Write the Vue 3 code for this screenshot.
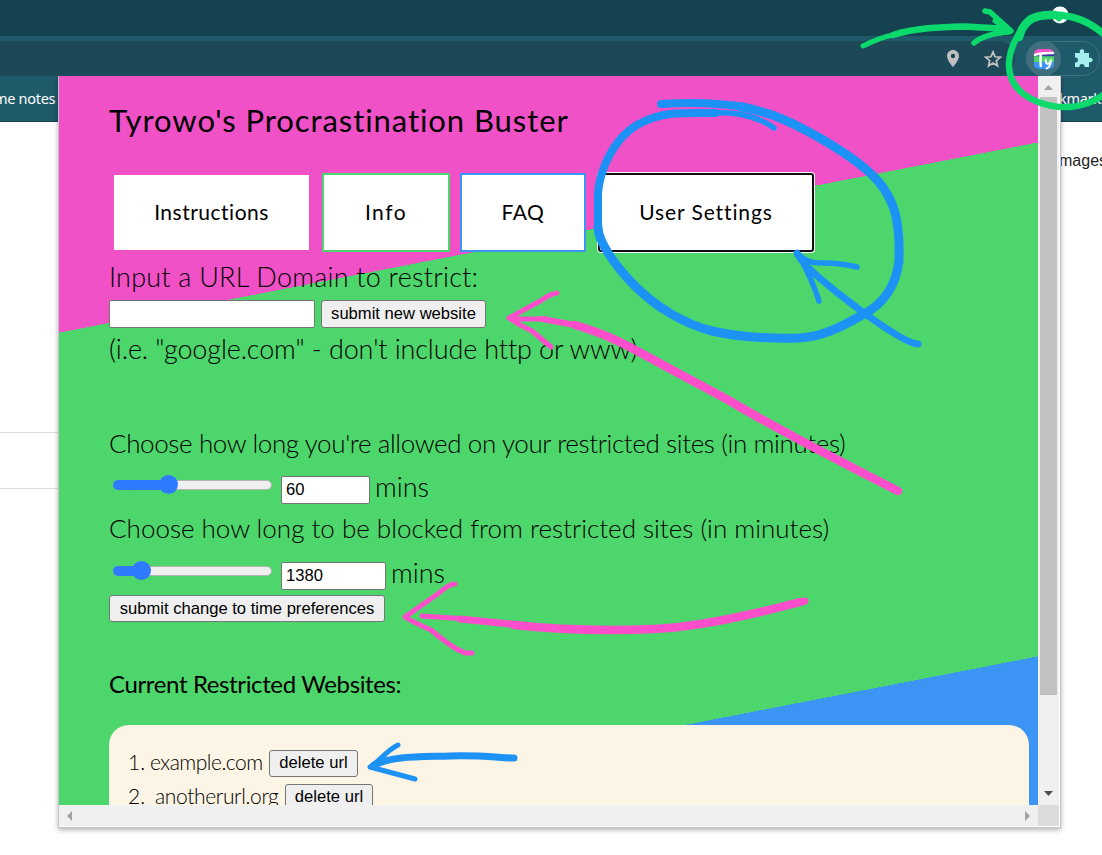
<script setup>
import { ref } from 'vue'

const tabs = [
  { label: 'Instructions', kind: 'instructions' },
  { label: 'Info', kind: 'info' },
  { label: 'FAQ', kind: 'faq' },
  { label: 'User Settings', kind: 'settings' },
]
const allowed = ref(60)
const blocked = ref(1380)
</script>

<template>
  <div class="screen">
    <header class="browser">
      <div class="tabstrip"></div>
      <div class="toolbar">
        <div class="omnibox">
          <svg class="pin" width="12" height="17" viewBox="0 0 12 17"><path fill-rule="evenodd" fill="#c1bfbf" d="M6 0C2.7 0 0 2.6 0 5.9 0 10.200 6 17 6 17s6-6.800 6-11.100C12 2.600 9.300 0 6 0zm0 3.800a2.200 2.200 0 1 1 0 4.400 2.200 2.200 0 0 1 0-4.400z" /></svg>
          <svg class="star" width="18" height="18" viewBox="0 0 18 18"><path fill="none" stroke="#c4c2c2" stroke-width="1.700" d="M9 1.900l2.050 4.900 5.250.45-4 3.450 1.200 5.150L9 13.100l-4.500 2.750 1.200-5.150-4-3.450 5.250-.45z" /></svg>
        </div>
        <div class="extensions">
          <div class="ext-active">
            <svg width="22" height="22" viewBox="0 0 22 22">
              <defs><clipPath id="logo"><rect x="1" y="1" width="20" height="20" rx="5" /></clipPath></defs>
              <g clip-path="url(#logo)">
                <path fill="#f151c7" d="M0 0h22v7H0z" /><path fill="#4dd66b" d="M0 8h22v6H0z" /><path fill="#3c94f5" d="M0 14h22v8H0z" />
                <path fill="#3c35a8" d="M0 6h22v2.200H0z" />
              </g>
              <path fill="none" stroke="#fff" stroke-width="2.400" stroke-linecap="round" d="M2 6.800Q9 4.600 20 5M7.800 6.500Q7 13 7.800 18" />
              <path fill="none" stroke="#fff" stroke-width="2" stroke-linecap="round" d="M12.800 11.800q-.2 4 2 4t3.200-4.300q-.4 8-4.400 9" />
            </svg>
          </div>
          <svg class="puzzle" width="19" height="19" viewBox="0 0 19 19"><path fill="#a5eeee" d="M1 4h5c-.8-2 .3-3.700 2-3.700S10.800 2 10 4h5v5c2-.8 3.700.3 3.700 2s-1.700 2.800-3.700 2v5h-4.500c.3-2-.8-3-2.500-3s-2.800 1-2.500 3H1v-4.500c2 .3 3-.8 3-2.500S3 8.200 1 8.500z" /></svg>
        </div>
      </div>
      <div class="bookmarks"><span>me notes</span><span class="bm-right">kmarks</span></div>
    </header>
    <main class="page">
      <span class="images">mages</span>
      <div class="rule"></div>
    </main>

    <section class="popup">
      <div class="viewport">
        <h1><span class="w-title">Tyrowo's Procrastination Buster</span></h1>
        <nav>
          <button v-for="t in tabs" :key="t.kind" class="tab" :class="t.kind"><span>{{ t.label }}</span></button>
        </nav>
        <p class="line l1">Input a URL Domain to restrict:</p>
        <div class="row site"><input class="url" type="text"><button class="btn b1">submit new website</button></div>
        <p class="line l2">(i.e. "google.com" - don't include http or www)</p>
        <p class="line l3">Choose how long you're allowed on your restricted sites (in minutes)</p>
        <div class="row time">
          <div class="slider s1"><i></i><b></b></div>
          <input v-model="allowed" class="num n1" type="text"><span class="mins">mins</span>
        </div>
        <p class="line l4">Choose how long to be blocked from restricted sites (in minutes)</p>
        <div class="row time">
          <div class="slider s2"><i></i><b></b></div>
          <input v-model="blocked" class="num n2" type="text"><span class="mins">mins</span>
        </div>
        <button class="btn b2">submit change to time preferences</button>
        <h2><span class="w-cur">Current Restricted Websites:</span></h2>
        <div class="sites">
          <div class="item"><span class="idx">1.</span><span class="host h-a">example.com</span><button class="btn b3">delete url</button></div>
          <div class="item"><span class="idx">2.</span><span class="host h-b">anotherurl.org</span><button class="btn b3 b4">delete url</button></div>
        </div>
      </div>
      <div class="vbar">
        <svg width="9" height="5" viewBox="0 0 9 5"><path fill="#a3a3a3" d="M0 5l4.500-5L9 5z" /></svg>
        <div class="thumb"></div>
        <svg class="down" width="9" height="5" viewBox="0 0 9 5"><path fill="#505050" d="M0 0l4.500 5L9 0z" /></svg>
      </div>
      <div class="hbar">
        <svg width="5" height="10" viewBox="0 0 5 10"><path fill="#a3a3a3" d="M5 0L0 5l5 5z" /></svg>
        <svg width="5" height="10" viewBox="0 0 5 10"><path fill="#a3a3a3" d="M0 0l5 5-5 5z" /></svg>
      </div>
      <div class="corner"></div>
    </section>

    <svg class="ink" width="1102" height="855" viewBox="0 0 1102 855" fill="none" stroke-linecap="round" stroke-linejoin="round">
      <circle cx="1060" cy="15" r="8.500" fill="#fff" />
      <g stroke="#0bd96b">
        <path stroke-width="5" d="M863 46C873 41 882 37 893 35" />
        <path stroke-width="6.500" d="M893 35C915 28 940 27 965 26.500L1000 28.500" />
        <path stroke-width="5.500" d="M985 11L990 12 1011 31M974 43Q984 34 1009 32" />
        <path stroke-width="5" d="M995 21L1010 31 1000 33 1003 27" />
        <path stroke-width="8.500" d="M1019 37C1024 19 1036 14 1055 15" />
        <path stroke-width="7" d="M1030 19C1040 14 1055 13 1072 17C1084 20 1094 25 1106 36" />
        <path stroke-width="6.500" d="M1018 35C1000 67 1010 91 1038 102C1062 111 1086 108 1106 93" />
        <path stroke-width="4" d="M1057 17Q1059 22 1061 17" />
      </g>
      <g stroke="#1c92f5">
        <path stroke-width="8" d="M661 104C700 101 725 104 745 107" />
        <path stroke-width="9" d="M741 107C750 108 758 111 766 113C795 122 855 155 878 181C894 200 898 218 899 243V261C896 284 885 303 864 314C838 329 820 337 799 338C762 339 738 337 712 331C684 324 656 307 635 286C614 265 598 241 598 227" />
        <path stroke-width="8" d="M598 227V193C600 170 613 139 637 125C662 111 680 113 716 113" />
        <path stroke-width="5.500" d="M716 113C740 111 764 120 774 128" />
        <path stroke-width="7" d="M797 253Q802 267 864 313Q907 344 918 344" />
        <path stroke-width="5.500" d="M819 301Q813 281 798 254Q808 264 823 263Q840 263 857 267" />
        <path stroke-width="5" d="M398 745C386 751 382 759 370 767L415 779" />
        <path stroke-width="7" d="M374 765C393 756 416 757 450 756C480 755 502 758 514 758" />
      </g>
      <g stroke="#ff4ecb">
        <path stroke-width="5" d="M557 293Q550 294 542 300L509 318Q519 325 532 331L551 347M512 319L547 319" />
        <path stroke-width="8.500" d="M575 325C610 335 630 347 663 365L730 401C785 434 836 459 898 491" />
        <path stroke-width="6" d="M542 319L575 325" />
        <path stroke-width="5" d="M455 584Q449 584 439 593L405 617Q413 622 431 630Q456 651 466 653H472M422 616L468 619" />
        <path stroke-width="8.500" d="M514 625C560 630 605 631 654 629C699 627 759 613 800 602" />
        <path stroke-width="7" d="M460 619L520 625M790 605L805 601" />
      </g>
    </svg>
  </div>
</template>

<style>
html, body { margin: 0; overflow: hidden; background: #fff; }
</style>
<style scoped>
.screen { position: relative; width: 1102px; height: 855px; overflow: hidden; background: #fff; color: #000; font-family: "Liberation Sans", Arial, sans-serif; }
.tabstrip { height: 36px; background: #154250; }
.toolbar { height: 35px; border-top: 5px solid #1f5a6b; background: #1f5a6b; display: flex; justify-content: space-between; }
.omnibox { width: 1015px; height: 35px; background: #1c4857; border-radius: 0 17px 17px 0; display: flex; align-items: center; justify-content: flex-end; gap: 25px; padding-right: 13px; box-sizing: border-box; }
.extensions { width: 74px; height: 35px; margin-right: 2px; border: 1px solid #41707e; border-radius: 18px; box-sizing: border-box; display: flex; align-items: center; gap: 13px; }
.ext-active { width: 35px; height: 35px; margin-left: -1px; flex: none; border-radius: 50%; background: #3f6e7c; display: flex; align-items: center; justify-content: center; }
.puzzle { flex: none; }
.bookmarks { height: 45px; border-bottom: 1px solid #183f4c; background: #1f5a6b; color: #fff; display: flex; justify-content: space-between; align-items: center; font: 14.5px/45px "Noto Sans", "Open Sans", sans-serif; }
.bookmarks span { white-space: nowrap; margin-left: -6px; letter-spacing: -.3px; }
.bookmarks .bm-right { width: 43px; margin: 0; }
.page { display: flex; flex-direction: column; }
.images { align-self: flex-end; width: 43px; margin-top: 30px; font-size: 16px; line-height: 18px; color: #222; }
.rule { width: 60px; height: 55px; margin-top: 262px; border: solid #dadce0; border-width: 1px 0; }

.popup { position: absolute; left: 59px; top: 76px; width: 1000px; height: 750px; display: grid; grid-template: 729px 21px / 979px 21px; border: solid #fff; border-width: 0 1px 1px 0; background: #fff; box-shadow: 0 0 0 1px #c5c5c5, 0 2px 5px 1px rgba(0,0,0,.3); clip-path: inset(0 -9px -9px -9px); }
.viewport { box-sizing: border-box; overflow: hidden; padding: 0 9px 0 50px; background: linear-gradient(169deg, #f151c7 252px, #4dd66b 252px, #4dd66b 756.500px, #3c94f5 756.500px); font-family: Lato, "Open Sans", sans-serif; font-weight: 300; }
h1, h2, p { margin: 0; white-space: nowrap; }
h1 { height: 60px; padding-top: 25px; box-sizing: border-box; font-size: 31px; line-height: 38px; font-weight: 400; }
.w-title { letter-spacing: .93px; }
nav { display: flex; height: 79px; margin: 37px 0 0 3px; }
.tab { box-sizing: border-box; height: 79px; padding: 0 0 3px; background: #fff; border: 2px solid #f151c7; font: 400 21px Lato, sans-serif; letter-spacing: .5px; color: #000; }
.instructions { width: 199px; }
.info { width: 128px; margin-left: 11px; border-color: #4dd66b; letter-spacing: 1.5px; }
.faq { width: 126px; margin-left: 10px; border-color: #3c94f5; }
.settings { width: 216px; margin-left: 12px; border-color: #101010; border-radius: 3px; box-shadow: 0 0 0 1px #fff; letter-spacing: .9px; }
.line { font-size: 27px; line-height: 34px; height: 34px; }
.l1 { margin-top: 8px; letter-spacing: .23px; }
.row { display: flex; }
.site { margin-top: 6px; height: 28px; }
input { box-sizing: border-box; height: 28px; border: 1px solid #767676; border-radius: 2px; background: #fff; padding: 0 4px; font: 16.600px "Liberation Sans", Arial, sans-serif; color: #000; }
.url { width: 206px; }
.btn { box-sizing: border-box; height: 27px; padding: 0 0 1px; border: 1px solid #767676; border-radius: 3px; background: #efefef; color: #000; font: 16.600px "Liberation Sans", Arial, sans-serif; white-space: nowrap; }
.b1 { width: 165px; height: 28px; margin-left: 6px; }
.l2 { margin-top: 4px; letter-spacing: -.13px; }
.l3 { margin-top: 60px; font-size: 26px; letter-spacing: -.38px; }
.time { height: 28px; margin-top: 16px; }
.slider { position: relative; width: 159px; height: 10px; margin: 4px 9px 0 4px; box-sizing: border-box; border: 1px solid #b2b2b2; border-radius: 5px; background: #efefef; }
.slider i { display: block; height: 10px; margin: -1px; border-radius: 5px 0 0 5px; background: #2f7bff; }
.slider b { position: absolute; top: -6px; width: 19px; height: 19px; border-radius: 50%; background: #2f7bff; }
.s1 i { width: 55px; } .s1 b { left: 45px; }
.s2 i { width: 28px; } .s2 b { left: 18px; }
.n1 { width: 89px; } .n2 { width: 105px; }
.mins { margin-left: 5px; font-size: 27px; line-height: 21px; }
.l4 { margin-top: 8px; font-size: 26px; line-height: 32px; }
.b2 { display: block; width: 276px; padding: 0; margin-top: 5px; }
h2 { margin-top: 45px; height: 35px; font-size: 24px; line-height: 33px; font-weight: 400; }
.w-cur { letter-spacing: -.37px; }
.sites { height: 200px; margin-top: 23px; box-sizing: border-box; padding: 20px 20px 20px 19px; border-radius: 20px; background: #fcf4e4; }
.item { display: flex; height: 34px; font-size: 21px; line-height: 33px; white-space: nowrap; }
.idx { width: 22px; flex: none; }
.host { flex: none; box-sizing: border-box; }
.h-a { width: 119px; letter-spacing: -.5px; } .h-b { width: 135px; padding-left: 5px; letter-spacing: -.35px; }
.b3 { width: 89px; margin-top: 5px; }
.b4 { width: 88px; }
.vbar { background: #f0f0f0; display: flex; flex-direction: column; align-items: center; padding-top: 9px; box-sizing: border-box; }
.thumb { width: 17px; height: 598px; margin-top: 7px; background: #c1c1c1; }
.down { margin-top: 96px; }
.hbar { background: #f0f0f0; display: flex; align-items: center; justify-content: space-between; padding: 0 8px; }
.corner { background: #dcdcdc; }
.ink { position: absolute; left: 0; top: 0; pointer-events: none; }
</style>
